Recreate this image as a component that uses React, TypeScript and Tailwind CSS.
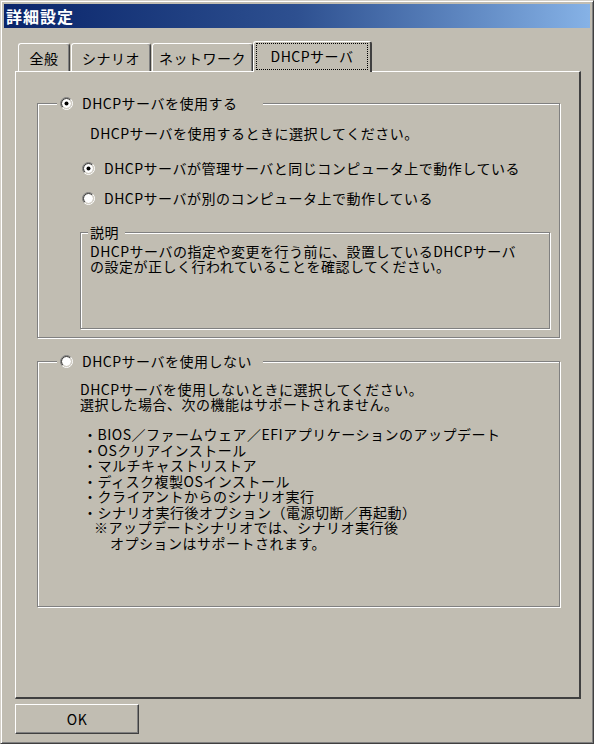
const font = "font-['Noto_Sans_CJK_JP','Noto_Sans',sans-serif]"

function Radio({ checked }: { checked?: boolean }) {
  return (
    <svg width="13" height="13" viewBox="0 0 13 13" className="shrink-0">
      <circle cx="6.5" cy="6.5" r="4.5" fill="#fff" />
      <path d="M2.257 10.743A6 6 0 0 1 10.743 2.257" stroke="#808080" fill="none" />
      <path d="M10.743 2.257A6 6 0 0 1 2.257 10.743" stroke="#fff" fill="none" />
      <path d="M2.964 10.036A5 5 0 0 1 10.036 2.964" stroke="#404040" fill="none" />
      <path d="M10.036 2.964A5 5 0 0 1 2.964 10.036" stroke="#d4d0c8" fill="none" />
      {checked && <circle cx="6.5" cy="6.5" r="2" fill="#000" />}
    </svg>
  )
}

function Tab({ label, w, ml }: { label: string; w: string; ml: string }) {
  return (
    <div
      className={`${w} ${ml} h-[28px] pt-[2px] flex items-center justify-center border-l border-t border-white border-r border-r-[#404040] rounded-t-[3px] shadow-[inset_-1px_0_0_#808080]`}
    >
      {label}
    </div>
  )
}

export default function App() {
  return (
    <div
      className={`${font} w-[594px] h-[744px] bg-[#c1bdb2] text-black text-[14px] tracking-[0.5px] border border-t-[#d4d0c8] border-l-[#d4d0c8] border-r-[#404040] border-b-[#404040] shadow-[inset_1px_1px_0_#fff,inset_-1px_-1px_0_#808080] p-[3px] flex flex-col`}
    >
      {/* title bar */}
      <div className="h-[24px] bg-linear-to-r from-[#0a246a] via-[#2e5090] to-[#86b2e6] flex items-center pl-[2px] text-white font-bold text-[16px] tracking-[1px]">
        詳細設定
      </div>

      <div className="pt-[13px] pl-[11px]">
        {/* tabs */}
        <div className="h-[30px] flex items-end pl-[3px]">
          <Tab label="全般" w="w-[52px]" ml="ml-0" />
          <Tab label="シナリオ" w="w-[80px]" ml="ml-[1px]" />
          <Tab label="ネットワーク" w="w-[101px]" ml="ml-[1px]" />
          <div className="relative z-10 -mb-px w-[119px] h-[31px] bg-[#c1bdb2] border-l border-t border-white border-r-2 border-r-[#404040] rounded-t-[3px] px-[2px] pt-[1px] pb-[2px]">
            <div className="h-full border border-dotted border-black flex items-center justify-center">
              DHCPサーバ
            </div>
          </div>
        </div>

        {/* tab panel */}
        <div className="w-[566px] h-[628px] border-l border-t border-white border-r-2 border-b-2 border-r-[#404040] border-b-[#404040] pt-[23px] pl-[21px]">
          <fieldset className="m-0 p-0 w-[523px] h-[243px] border border-[#808080] shadow-[inset_1px_1px_0_#fff,1px_1px_0_#fff]">
            <legend className="ml-[19px] w-[206px] h-[16px] flex items-center gap-[9px] pl-[3px] bg-[#c1bdb2]">
              <Radio checked />
              <span className="leading-[16px]">DHCPサーバを使用する</span>
            </legend>
            <div className="mt-[14px] pl-[52px] leading-[16px]">
              DHCPサーバを使用するときに選択してください。
            </div>
            <div className="mt-[19px] pl-[44px] h-[16px] flex items-center gap-[9px]">
              <Radio checked />
              <span>DHCPサーバが管理サーバと同じコンピュータ上で動作している</span>
            </div>
            <div className="mt-[14px] pl-[44px] h-[16px] flex items-center gap-[9px]">
              <Radio />
              <span>DHCPサーバが別のコンピュータ上で動作している</span>
            </div>
            <fieldset className="mt-[18px] ml-[42px] p-0 w-[470px] h-[105px] border border-[#808080] shadow-[inset_1px_1px_0_#fff,1px_1px_0_#fff]">
              <legend className="ml-[7px] w-[37px] h-[16px] leading-[16px] pl-[2px] bg-[#c1bdb2]">説明</legend>
              <p className="pt-[4px] pl-[9px] leading-[15px] whitespace-nowrap">
                DHCPサーバの指定や変更を行う前に、設置しているDHCPサーバ
                <br />
                の設定が正しく行われていることを確認してください。
              </p>
            </fieldset>
          </fieldset>

          <fieldset className="mt-[15px] m-0 p-0 w-[523px] h-[254px] border border-[#808080] shadow-[inset_1px_1px_0_#fff,1px_1px_0_#fff]">
            <legend className="ml-[19px] w-[206px] h-[16px] flex items-center gap-[9px] pl-[3px] bg-[#c1bdb2]">
              <Radio />
              <span className="leading-[16px]">DHCPサーバを使用しない</span>
            </legend>
            <p className="mt-[13px] pl-[42px] leading-[15px] whitespace-nowrap">
              DHCPサーバを使用しないときに選択してください。
              <br />
              選択した場合、次の機能はサポートされません。
            </p>
            <div className="mt-[15px] leading-[15.5px] whitespace-nowrap">
              <div className="pl-[45px]">・BIOS／ファームウェア／EFIアプリケーションのアップデート</div>
              <div className="pl-[45px]">・OSクリアインストール</div>
              <div className="pl-[45px]">・マルチキャストリストア</div>
              <div className="pl-[45px]">・ディスク複製OSインストール</div>
              <div className="pl-[45px]">・クライアントからのシナリオ実行</div>
              <div className="pl-[45px]">・シナリオ実行後オプション（電源切断／再起動）</div>
              <div className="pl-[56px]">※アップデートシナリオでは、シナリオ実行後</div>
              <div className="pl-[72px]">オプションはサポートされます。</div>
            </div>
          </fieldset>
        </div>

        {/* buttons */}
        <button className="mt-[5px] w-[124px] h-[30px] flex items-center justify-center border-l border-t border-white border-r border-b border-r-[#404040] border-b-[#404040] shadow-[inset_-1px_-1px_0_#808080]">
          OK
        </button>
      </div>
    </div>
  )
}
